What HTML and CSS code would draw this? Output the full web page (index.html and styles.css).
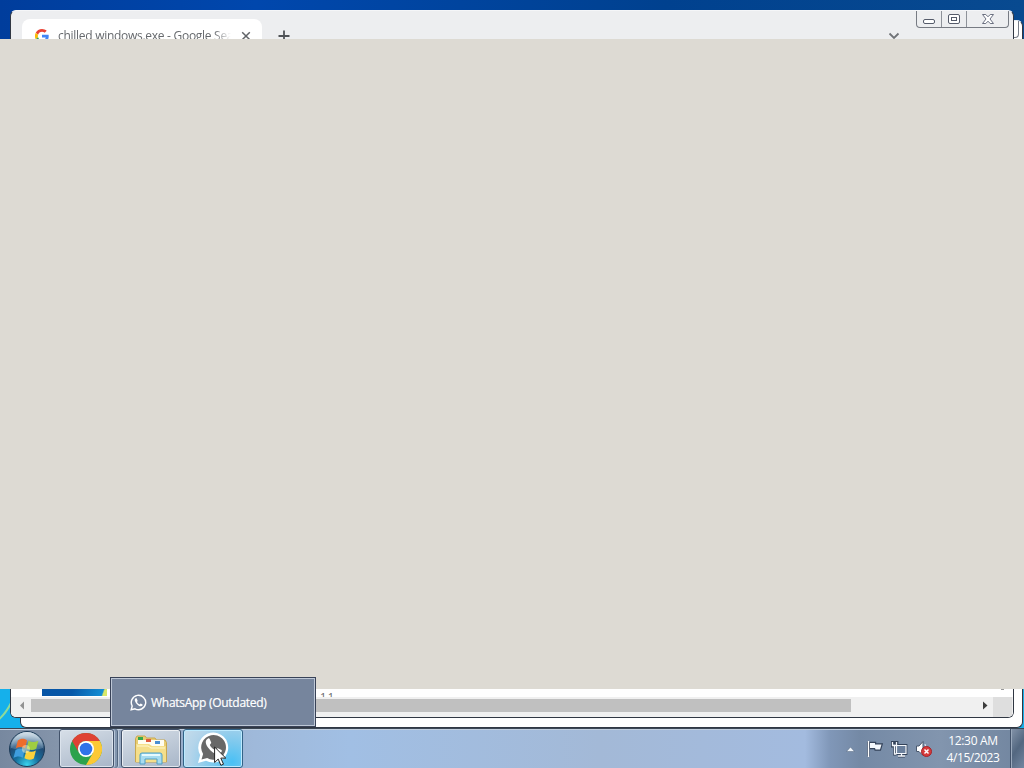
FILE: index.html
```
<!DOCTYPE html>
<html lang="en">

<head>
  <meta charset="UTF-8">
  <title>Desktop</title>
  <link rel="stylesheet" href="styles.css">
</head>

<body>
  <div class="desktop">
    <svg class="streak" width="12" height="40" viewBox="0 0 12 40">
      <path d="M-2 31C3 27 7 22 11 14" fill="none" stroke="#8edb9a" stroke-width="2" />
    </svg>

    <div class="window window-back">
      <div class="back-controls"></div>
    </div>

    <div class="window window-front">
      <div class="tab-strip">
        <div class="tab">
          <svg class="tab-icon" width="14" height="14" viewBox="0 0 48 48">
            <path fill="#ea4335" d="M24 9.500c3.500 0 6.700 1.200 9.200 3.600l6.900-6.900C35.900 2.400 30.500 0 24 0 14.600 0 6.500 5.400 2.600 13.200l8 6.200C12.400 13.700 17.700 9.500 24 9.500z" />
            <path fill="#4285f4" d="M47 24.500c0-1.600-.2-3.100-.4-4.500H24v9h12.900c-.6 3-2.200 5.500-4.700 7.200l7.700 6C44.400 38 47 31.800 47 24.500z" />
            <path fill="#fbbc05" d="M10.500 28.600a14.500 14.500 0 0 1 0-9.200l-8-6.200a24 24 0 0 0 0 21.600z" />
            <path fill="#34a853" d="M24 48c6.500 0 11.900-2.100 15.900-5.800l-7.700-6C30 37.700 27.200 38.500 24 38.500c-6.300 0-11.600-4.200-13.500-9.900l-8 6.200C6.500 42.600 14.600 48 24 48z" />
          </svg>
          <span class="tab-title">chilled windows.exe - Google Search</span>
          <svg class="tab-close" width="10" height="10" viewBox="0 0 10 10">
            <path d="M1.200 1.200l7.600 7.600M8.800 1.200L1.200 8.800" stroke="#606367" stroke-width="1.500" />
          </svg>
        </div>
        <svg class="new-tab" width="12" height="12" viewBox="0 0 12 12">
          <path d="M6 .5v11M.5 6h11" stroke="#505357" stroke-width="1.800" />
        </svg>
        <svg class="tab-search" width="12" height="8" viewBox="0 0 12 8">
          <path d="M1.500 1.500L6 6l4.500-4.500" fill="none" stroke="#707377" stroke-width="1.800" />
        </svg>
      </div>

      <div class="window-controls">
        <div class="control">
          <svg width="14" height="12" viewBox="0 0 14 12"><rect x="1.500" y="6.500" width="11" height="4" rx="1.500" fill="#fff" stroke="#555b6a" /></svg>
        </div>
        <div class="control">
          <svg width="14" height="12" viewBox="0 0 14 12" fill="#fff" stroke="#555b6a"><rect x="1.500" y="1.500" width="11" height="9" rx="1.500" /><rect x="4.500" y="4.500" width="5" height="3" /></svg>
        </div>
        <div class="control control-close">
          <svg width="14" height="12" viewBox="0 0 14 12"><path d="M1.500 1.500h3.300L7 3.800l2.200-2.300h3.300L9 6l3.500 4.500H9.200L7 8.200l-2.200 2.300H1.500L5 6z" fill="#fff" stroke="#6b7080" /></svg>
        </div>
      </div>

      <div class="page-bottom">
        <div class="page-row">
          <div class="thumb"></div>
          <span class="page-text">11</span>
          <div class="corner-arrow"></div>
        </div>
        <div class="scrollbar">
          <svg width="20" height="17" viewBox="0 0 20 17"><path d="M13 4.500v8L9 8.500z" fill="#929292" /></svg>
          <div class="scroll-track">
            <div class="scroll-thumb"></div>
          </div>
          <svg width="15" height="17" viewBox="0 0 15 17"><path d="M5 4.500v8l4.500-4z" fill="#3c3c3c" /></svg>
          <div class="scroll-corner"></div>
        </div>
      </div>
    </div>

    <div class="blank-window"></div>

    <div class="taskbar">
      <svg class="start" width="38" height="38" viewBox="0 0 38 38">
        <defs>
          <radialGradient id="orb" cx=".5" cy=".95" r=".85">
            <stop offset="0" stop-color="#39d3ee" />
            <stop offset=".4" stop-color="#16709e" />
            <stop offset=".75" stop-color="#214a73" />
            <stop offset="1" stop-color="#8fa9bd" />
          </radialGradient>
          <linearGradient id="gloss" x1="0" y1="0" x2="0" y2="1">
            <stop offset="0" stop-color="#e2ebf2" stop-opacity=".85" />
            <stop offset="1" stop-color="#8ab0ca" stop-opacity=".25" />
          </linearGradient>
        </defs>
        <circle cx="19" cy="19" r="17.500" fill="url(#orb)" stroke="#1c3b58" />
        <path d="M3 18a16 16 0 0 1 32 0c-9 3-22 3-32 0z" fill="url(#gloss)" />
        <g transform="translate(-2.800 -2.800) scale(1.150)">
          <path d="M11 11.500c3-2 5-1.800 8-.2l-1.700 7c-3-1.500-5.500-1.500-8 0z" fill="#ee6c2c" />
          <path d="M20.300 11.800c3 1.600 5.500 1.500 8.500 0l-1.800 7c-3 1.500-5.500 1.400-8.300-.2z" fill="#9fcd42" />
          <path d="M9 19.800c2.800-1.600 5-1.500 8 0l-1.700 6.700c-3-1.600-5.300-1.400-8.100.2z" fill="#3f9ddd" />
          <path d="M18.400 20.200c3 1.500 5.500 1.500 8.300.1l-1.800 6.900c-2.800 1.500-5.400 1.400-8.200-.2z" fill="#fbd23c" />
          <circle cx="18" cy="19" r="3.500" fill="#fff6c9" opacity=".45" />
        </g>
      </svg>

      <div class="task task-chrome">
        <svg width="32" height="32" viewBox="0 0 32 32">
          <circle cx="16" cy="16" r="16" fill="#2ba24c" />
          <path d="M16 8h13.860A16 16 0 0 1 16 32l6.930-12z" fill="#fcc934" />
          <path d="M2.140 8A16 16 0 0 1 29.860 8H16a8 8 0 0 0-6.930 12z" fill="#df4234" />
          <circle cx="16" cy="16" r="8" fill="#fff" />
          <circle cx="16" cy="16" r="6.300" fill="#2f73e8" />
        </svg>
      </div>

      <div class="task task-explorer">
        <svg width="34" height="32" viewBox="0 0 34 32">
          <path d="M1.500 28V4.500L3 2h8l1.500 2H21l1.500 2H31l1.500 2.500V28z" fill="#e8cd73" stroke="#c9a850" />
          <path d="M4 6h26v6H4z" fill="#fffdf0" />
          <rect x="4" y="3" width="5" height="3" fill="#36a84b" />
          <rect x="12" y="5" width="5" height="3" fill="#df5c40" />
          <rect x="21" y="7" width="5" height="3" fill="#4a8ed2" />
          <path d="M2 10h13l3 2h14v16H2z" fill="#f5df8b" />
          <path d="M3 12h11l3 2h14" fill="none" stroke="#fff8cf" />
          <path d="M6 30v-9q0-2 2-2h18q2 0 2 2v9h-5v-5H11v5z" fill="#a7dcf0" stroke="#4f9fc6" />
          <path d="M8 21h18" stroke="#e6faff" stroke-width="2" />
        </svg>
      </div>

      <div class="task task-whatsapp">
        <svg width="32" height="33" viewBox="0 0 32 33">
          <path d="M1 32l2.200-8A15 15 0 1 1 9 29.700z" fill="#fff" />
          <path d="M4.500 28.500l1.600-5.500a12.400 12.400 0 1 1 4.100 4z" fill="#686868" />
          <path d="M11 7.500c-3 1.500-3 5 .2 9.300 3.700 5 8.400 7.500 11.400 6 2-1 2.700-3 2-3.700l-3.700-1.800c-1-.4-1.700 2-2.500 1.900-2-.6-5-3.600-5.500-5.200-.1-.8 1.600-1.700 1.300-2.600L12.700 8c-.3-.7-.8-.8-1.700-.5z" fill="#fff" />
        </svg>
      </div>

      <div class="tray">
        <svg class="tray-more" width="9" height="6" viewBox="0 0 9 6"><path d="M.5 5.500l4-4.500 4 4.500z" fill="#f2f7fc" stroke="#53657d" stroke-width=".5" /></svg>
        <svg class="tray-flag" width="18" height="18" viewBox="0 0 18 18">
          <path d="M2.500 1.500v15M4 3h5v1.500h6.500L14 9.500H9.500L9 8H4z" fill="none" stroke="#34435a" stroke-width="2.400" />
          <path d="M2.500 1v16" stroke="#fff" stroke-width="1.400" />
          <path d="M4 3h5v1.500h6.500L14 9.500H9.500L9 8H4z" fill="#f4f8fc" />
        </svg>
        <svg class="tray-net" width="17" height="17" viewBox="0 0 17 17" fill="none">
          <path d="M5.500 4.500h9.500v8H5.500zM7 15h7M10.500 12v3M1 1.500h5v3.500H1zM3.500 5v8h2" stroke="#34435a" stroke-width="2.800" />
          <path d="M5.500 4.500h9.500v8H5.500z" fill="#6a7f9c" stroke="#f5f8fc" stroke-width="1.200" />
          <path d="M7 15h7M10.500 12v3M1.500 1v3.500h4V1M3.500 4v9h2" stroke="#f5f8fc" stroke-width="1.300" />
        </svg>
        <svg class="tray-sound" width="18" height="18" viewBox="0 0 18 18">
          <path d="M1.500 6H4l4-4.500v14L4 11.500H1.500z" fill="#fff" stroke="#49586e" />
          <path d="M10 4q2 4 0 9" fill="none" stroke="#e9f0f7" />
          <circle cx="11.500" cy="11.500" r="5" fill="#d73b3b" stroke="#a62229" />
          <path d="M9.500 9.500l4 4m0-4l-4 4" stroke="#fff" stroke-width="1.500" />
        </svg>
        <div class="clock">
          <span class="time">12:30 AM</span>
          <span class="date">4/15/2023</span>
        </div>
      </div>
      <div class="show-desktop"></div>
    </div>

    <div class="preview">
      <svg width="17" height="17" viewBox="0 0 17 17" fill="none">
        <path d="M1.200 15.800l1-3.800A7.200 7.200 0 1 1 5 14.800z" stroke="#fff" stroke-width="1.400" />
        <path d="M5.700 4.300c-1.500.8-1.200 2.800.4 4.900 1.800 2.400 4.100 3.600 5.600 2.900 1-.5 1.200-1.400.8-1.700l-1.700-.8c-.5-.2-.8.9-1.200.8-1-.3-2.300-1.700-2.500-2.500 0-.4.700-.8.500-1.200l-.8-2.100c-.2-.4-.7-.5-1.100-.3z" fill="#fff" />
      </svg>
      <span>WhatsApp (Outdated)</span>
    </div>

    <svg class="cursor" width="13" height="21" viewBox="0 0 13 21">
      <path d="M.6 1v15.500l3.600-3.400 2.700 6.200 2.600-1.100-2.700-6.100h5z" fill="#fff" stroke="#222" />
    </svg>
  </div>
</body>

</html>
```
FILE: styles.css
```
body {
  margin: 0;
  font-family: "Open Sans", "Noto Sans", sans-serif;
  font-size: 12px;
}

svg {
  display: block;
  flex-shrink: 0;
}

.desktop {
  position: relative;
  width: 1024px;
  height: 768px;
  overflow: hidden;
  background: linear-gradient(90deg, #003d9c, #0047ad 25%, #00418f 65%, #084a90) top / 100% 40px no-repeat, #15b0eb;
}

.streak {
  position: absolute;
  left: 0;
  top: 689px;
}

/* windows */
.window {
  position: absolute;
  box-sizing: border-box;
  border: 1px solid #303743;
  border-radius: 6px;
  background: #fff;
}

.window-back {
  left: 20px;
  top: 20px;
  width: 1003px;
  height: 708px;
  border-top-color: #e9edf3;
}

.back-controls {
  box-sizing: border-box;
  width: 60px;
  height: 17px;
  margin-left: 938px;
  border: 1px solid #777d88;
  border-top: 0;
  border-radius: 0 0 4px 4px;
}

.window-front {
  left: 10px;
  top: 10px;
  width: 1004px;
  height: 708px;
  display: flex;
  flex-direction: column;
  justify-content: space-between;
  background: #edeef0;
  border-top-color: #f5f6f8;
  overflow: hidden;
}

.tab-strip {
  display: flex;
  padding: 8px 0 0 11px;
}

.tab {
  display: flex;
  align-items: center;
  box-sizing: border-box;
  width: 240px;
  height: 34px;
  padding: 0 11px 0 13px;
  border-radius: 8px 8px 0 0;
  background: #fff;
}

.tab-title {
  width: 173px;
  margin: -1px 10px 0 9px;
  overflow: hidden;
  white-space: nowrap;
  color: #65686c;
  letter-spacing: -0.280px;
  -webkit-mask-image: linear-gradient(90deg, #000 90%, transparent);
  mask-image: linear-gradient(90deg, #000 90%, transparent);
}

.new-tab {
  margin: 11px 0 0 16px;
}

.tab-search {
  margin: 13px 0 0 598px;
}

.window-controls {
  position: absolute;
  top: 0;
  right: 4px;
  display: flex;
  box-sizing: border-box;
  width: 93px;
  height: 17px;
  border: 1px solid #777b83;
  border-top: 0;
  border-radius: 0 0 4px 4px;
}

.control {
  display: flex;
  flex: 0 0 24px;
  justify-content: center;
  padding-top: 2px;
  border-right: 1px solid #8e9299;
}

.control-close {
  flex: 1;
  border-right: 0;
}

.page-bottom {
  background: #fff;
}

.page-row {
  display: flex;
  align-items: flex-end;
  height: 30px;
}

.thumb {
  width: 65px;
  height: 22px;
  margin: 0 0 1px 31px;
  background: linear-gradient(110deg, #0754a5 0%, #0758a8 50%, #148ed4 92%, #d8e96a 94%);
}

.page-text {
  align-self: flex-start;
  width: 18px;
  height: 5px;
  margin: 25px 0 0 213px;
  overflow: hidden;
  color: #666;
  font-size: 11px;
  line-height: 9px;
  letter-spacing: 1.500px;
}

.corner-arrow {
  align-self: center;
  width: 3px;
  height: 2px;
  margin: 13px 0 0 663px;
  background: #999;
}

.scrollbar {
  display: flex;
  height: 20px;
  padding-right: 1px;
  background: #f0f0f0;
}

.scroll-track {
  flex: 1;
  padding: 2px 0;
}

.scroll-thumb {
  width: 820px;
  height: 13px;
  background: #c0c0c0;
}

.scroll-corner {
  width: 19px;
  background: #dedede;
}

.blank-window {
  position: absolute;
  left: 0;
  top: 39px;
  width: 100%;
  height: 650px;
  background: #dddad3;
}

/* taskbar */
.taskbar {
  position: absolute;
  left: 0;
  bottom: 0;
  display: flex;
  box-sizing: border-box;
  width: 100%;
  height: 40px;
  border-top: 1px solid #3a4655;
  box-shadow: inset 0 1px #c1cede;
  background: linear-gradient(90deg, #77889f 0, #8494aa 55px, #94a6bf 120px, #9fb9da 255px, #a1bfe4 350px, #a3b9d7 600px, #a3bbdf 805px, #8097b8 830px, #7489a5 860px, #8295ae 940px, #71859f);
}

.start {
  margin: 1px 13px 0 8px;
}

.task {
  display: flex;
  align-items: center;
  justify-content: center;
  box-sizing: border-box;
  height: 39px;
  border: 1px solid #42526a;
  border-radius: 3px;
  box-shadow: inset 0 0 0 1px rgba(255, 255, 255, 0.650);
  background: linear-gradient(160deg, #d7dfe8, #a8b6c8);
}

.task-chrome {
  width: 55px;
  margin-right: 7px;
  padding-right: 2px;
  box-shadow: inset 0 0 0 1px #dbe3ec, 1px 0 #b7c6d8, 3px 0 #8195ae, 4px 0 #536780, 5px 0 #bfccdb;
}

.task-explorer {
  width: 60px;
  margin-right: 2px;
}

.task-explorer svg {
  margin-top: 2px;
}

.task-whatsapp {
  width: 60px;
  border-color: #326387;
  box-shadow: inset 0 0 0 1px #bceaff;
  background: radial-gradient(circle at 48px 32px, #49c0f5, #79c8ee 18px, #b3d4ea 42px, #c5dceb);
}

.task-whatsapp svg {
  margin-top: -2px;
}

.tray {
  display: flex;
  flex: 1;
  align-items: center;
  justify-content: flex-end;
  color: #fff;
}

.tray-more {
  margin-right: 11px;
}

.tray-flag {
  margin-right: 7px;
}

.tray-net {
  margin: 1px 7px 0 0;
}

.tray-sound {
  margin-top: 1px;
}

.clock {
  display: flex;
  flex-direction: column;
  align-items: center;
  width: 72px;
  margin: 0 1px 0 4px;
  line-height: 17px;
  font-size: 12px;
}

.time {
  letter-spacing: -0.300px;
}

.date {
  letter-spacing: -0.450px;
}

.show-desktop {
  width: 13px;
  border-left: 1px solid #415169;
  box-shadow: inset 1px 0 #9aa9bc;
  background: linear-gradient(125deg, #8494aa, #536780 50%, #7286a0);
}

.preview {
  position: absolute;
  left: 110px;
  top: 677px;
  display: flex;
  align-items: center;
  gap: 4px;
  box-sizing: border-box;
  width: 206px;
  height: 50px;
  padding: 1px 0 0 19px;
  border: 1px solid #384257;
  box-shadow: inset 0 0 0 1px #bdc7d6;
  background: #76859d;
  color: #fff;
  letter-spacing: -0.280px;
  -webkit-text-stroke: 0.200px #fff;
}

.cursor {
  position: absolute;
  left: 214px;
  top: 746px;
}
```
